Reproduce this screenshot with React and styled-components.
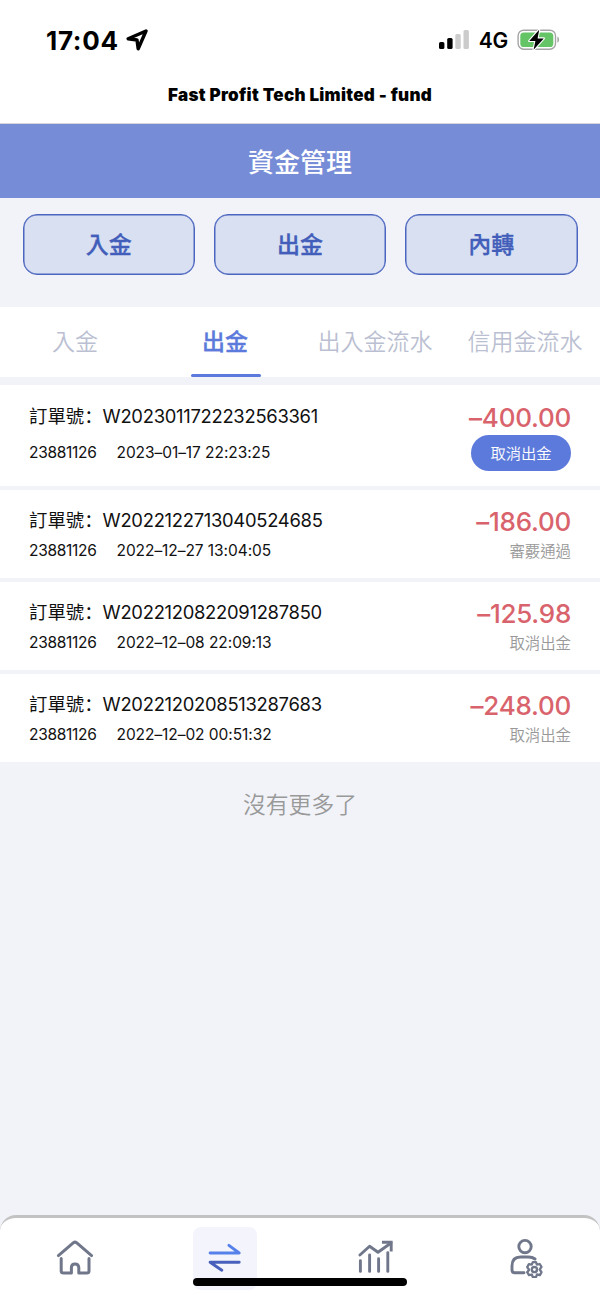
import React from "react";
import styled, { createGlobalStyle } from "styled-components";

const latin = `Inter, "Noto Sans CJK TC", sans-serif`;
const cjk = `"Noto Sans CJK TC", Inter, sans-serif`;

const GlobalStyle = createGlobalStyle`
  * {
    box-sizing: border-box;
  }

  body {
    margin: 0;
    background: #f2f3f8;
    font-family: ${cjk};
    color: #111111;
  }

  button {
    font-family: inherit;
    padding: 0;
    cursor: pointer;
  }
`;

const Screen = styled.div`
  display: flex;
  flex-direction: column;
  width: 600px;
  height: 1298px;
  overflow: hidden;
`;

const StatusBar = styled.div`
  display: flex;
  justify-content: space-between;
  align-items: center;
  height: 80px;
  padding: 0 40px 0 46px;
  background: #ffffff;
  color: #000000;
  font-family: ${latin};
`;

const StatusGroup = styled.div`
  display: flex;
  align-items: center;
  gap: ${({ $gap }) => $gap};
`;

const Clock = styled.span`
  padding-top: 1px;
  font-size: 26px;
  font-weight: 700;
  line-height: 30px;
  letter-spacing: 0.7px;
`;

const Network = styled.span`
  padding-top: 2px;
  font-size: 21px;
  font-weight: 600;
  line-height: 26px;
  letter-spacing: -0.2px;
`;

const PageTitle = styled.div`
  height: 44px;
  padding-top: 5px;
  background: #ffffff;
  border-bottom: 1px solid #d5d6da;
  color: #000000;
  font-family: ${latin};
  font-size: 17px;
  font-weight: 900;
  line-height: 20px;
  letter-spacing: 0.28px;
  text-align: center;
`;

const Header = styled.header`
  display: flex;
  justify-content: center;
  align-items: center;
  height: 74px;
  padding-bottom: 2px;
  background: #768cd7;
  color: #ffffff;
  font-size: 26px;
  font-weight: 500;
`;

const Actions = styled.div`
  display: grid;
  grid-template-columns: repeat(3, 1fr);
  gap: 18.5px;
  height: 109px;
  padding: 16px 22.5px 32px;
`;

const ActionButton = styled.button`
  border: 1.5px solid #4c66c0;
  border-radius: 14px;
  padding-bottom: 3px;
  background: #d8e0f2;
  box-shadow: inset 0 0 0 0.5px #4c66c0;
  color: #425eba;
  font-size: 23px;
  font-weight: 500;
  -webkit-text-stroke: 0.3px #425eba;
`;

const Tabs = styled.nav`
  display: grid;
  grid-template-columns: repeat(4, 1fr);
  height: 70px;
  margin-bottom: 8px;
  background: #ffffff;
`;

const Tab = styled.button`
  display: flex;
  flex-direction: column;
  justify-content: space-between;
  align-items: center;
  border: 0;
  background: none;
  color: ${({ $active }) => ($active ? "#5c7adb" : "#bbbfd2")};
  font-size: 23px;
  font-weight: ${({ $active }) => ($active ? 500 : 350)};
  -webkit-text-stroke: ${({ $active }) => ($active ? "0.3px #5c7adb" : "0")};
  line-height: 34px;
  padding-top: 16px;

  &::after {
    content: "";
    width: 70px;
    height: 3px;
    margin-left: 2px;
    border-radius: 2px;
    background: ${({ $active }) => ($active ? "#5c7adb" : "transparent")};
  }
`;

const OrderList = styled.main`
  display: flex;
  flex-direction: column;
  gap: 4px;
`;

const OrderRow = styled.article`
  display: flex;
  justify-content: space-between;
  height: ${({ $tall }) => ($tall ? "101px" : "88px")};
  padding: ${({ $tall }) => ($tall ? "17px" : "16px")} 29px 0;
  background: #ffffff;
`;

const OrderInfo = styled.div`
  display: flex;
  flex-direction: column;
  gap: ${({ $tall }) => ($tall ? "10px" : "4px")};
`;

const OrderNumber = styled.div`
  display: flex;
  height: 28px;
  line-height: 28px;
  font-size: 18.4px;
`;

const OrderLabel = styled.span`
  margin-top: -1px;
`;

const Colon = styled.span`
  font-family: "Noto Sans CJK SC", sans-serif;
  margin-top: -1px;
`;

const OrderCode = styled.span`
  font-family: ${latin};
  font-size: 18.4px;
  letter-spacing: -0.28px;
`;

const OrderMeta = styled.div`
  display: flex;
  gap: 20px;
  font-family: ${latin};
  font-size: 15.5px;
  line-height: 26px;
`;

const Account = styled.span`
  letter-spacing: -0.3px;
`;

const Time = styled.span`
  letter-spacing: -0.06px;
`;

const OrderResult = styled.div`
  display: flex;
  flex-direction: column;
  align-items: flex-end;
`;

const Amount = styled.div`
  height: ${({ $tall }) => ($tall ? "33px" : "31px")};
  color: #d9636c;
  font-family: ${latin};
  font-size: 26px;
  font-weight: 500;
  line-height: 32px;
  letter-spacing: -0.25px;
`;

const CancelButton = styled.button`
  width: 100px;
  height: 36px;
  padding-bottom: 2px;
  border: 0;
  border-radius: 18px;
  background: #5c7adb;
  color: #ffffff;
  font-size: 15.3px;
  font-weight: 350;
  line-height: 34px;
`;

const Status = styled.div`
  color: #999999;
  font-size: 15.4px;
  font-weight: 350;
  line-height: 26px;
`;

const EndNote = styled.p`
  margin: 25px 0 0;
  color: #999999;
  font-size: 22.8px;
  font-weight: 350;
  line-height: 34px;
  text-align: center;
`;

const TabBar = styled.footer`
  position: relative;
  display: grid;
  grid-template-columns: repeat(4, 1fr);
  justify-items: center;
  height: 83px;
  margin-top: auto;
  padding-top: 9px;
  border-top: 3px solid #c2c2c2;
  border-radius: 16px 16px 0 0;
  background: #ffffff;
`;

const TabBarItem = styled.button`
  display: flex;
  justify-content: center;
  align-items: center;
  width: 64px;
  height: 63px;
  padding-bottom: 3px;
  border: 0;
  border-radius: 8px;
  background: ${({ $active }) => ($active ? "#f3f4fc" : "transparent")};
`;

const HomeIndicator = styled.div`
  position: absolute;
  left: 193px;
  bottom: 12px;
  width: 214px;
  height: 8px;
  border-radius: 4px;
  background: #000000;
`;

const LocationIcon = () => (
  <svg width="22" height="22" viewBox="0 0 22 22" fill="none">
    <path
      d="M20 2L2.2 9.8L11 11L12.2 19.8Z"
      stroke="#000000"
      strokeWidth="3.4"
      strokeLinejoin="round"
    />
  </svg>
);

const SignalIcon = () => (
  <svg width="31" height="20" viewBox="0 0 31 20">
    <rect x="0" y="12" width="5.4" height="7" rx="1.6" fill="#000000" />
    <rect x="8.2" y="8" width="5.4" height="11" rx="1.6" fill="#000000" />
    <rect x="16.3" y="4" width="5.4" height="15" rx="1.6" fill="#cccccc" />
    <rect x="24.5" y="0" width="5.4" height="19" rx="1.6" fill="#cccccc" />
  </svg>
);

const BatteryIcon = () => (
  <svg width="43" height="22" viewBox="0 0 43 22">
    <rect
      x="1.1"
      y="1.2"
      width="37.4"
      height="19"
      rx="5.6"
      fill="#ffffff"
      stroke="#a5a5a5"
      strokeWidth="1.4"
    />
    <rect x="3.3" y="3.4" width="33" height="14.6" rx="3.6" fill="#65c466" />
    <path d="M40.4 7.5C42.6 8.4 42.6 13 40.4 13.8Z" fill="#a5a5a5" />
    <path
      d="M22.2 0.8L12.2 12H18.4L16.6 20.8L26.8 9.4H20.6Z"
      fill="#000000"
      stroke="#ffffff"
      strokeWidth="2.2"
      strokeLinejoin="round"
      paintOrder="stroke"
    />
  </svg>
);

const HomeIcon = () => (
  <svg
    width="38"
    height="38"
    viewBox="0 0 38 38"
    fill="none"
    stroke="#70778a"
    strokeWidth="3"
    strokeLinecap="round"
    strokeLinejoin="round"
  >
    <path d="M2.4 17.6L17.5 4.7Q19 3.6 20.5 4.7L35.6 17.6" />
    <path d="M5.2 20.4V33Q5.2 35 7.6 35H15.4V29.6Q15.4 25.9 19 25.9T22.8 29.6V35H30.8Q33 35 33 33V20.4" />
  </svg>
);

const TransferIcon = () => (
  <svg
    width="36"
    height="32"
    viewBox="0 0 36 32"
    fill="none"
    strokeWidth="2.9"
    strokeLinecap="round"
    strokeLinejoin="round"
  >
    <path d="M3.1 12H32.2L21.9 4.4" stroke="#5680ea" />
    <path d="M32.2 21.2H3.1L14.8 29.2" stroke="#4860bb" />
  </svg>
);

const ChartIcon = () => (
  <svg
    width="38"
    height="38"
    viewBox="0 0 38 38"
    fill="none"
    stroke="#70778a"
    strokeWidth="2.9"
    strokeLinecap="round"
  >
    <path d="M4.4 22.6V33.4M13.6 17V33.4M22.6 20.8V33.4M31.8 14.6V33.4" />
    <path d="M3.9 17L13.6 8.2L22 14.2L35 5" strokeLinejoin="round" />
    <path d="M27.4 4.3H35.2V12" strokeLinecap="square" />
  </svg>
);

const ProfileIcon = () => (
  <svg
    width="38"
    height="42"
    viewBox="0 0 38 42"
    fill="none"
    stroke="#70778a"
    strokeLinecap="round"
    strokeLinejoin="round"
  >
    <circle cx="19" cy="10.6" r="6.2" strokeWidth="2.9" />
    <path
      d="M29 23Q26.5 21 22.5 21H14.5Q6 21 6 30V34Q6 36.8 8.8 36.8H18"
      strokeWidth="2.9"
    />
    <g strokeWidth="2.3" transform="translate(0 1.2)">
      <path d="M26.8 24.9H30L30.9 27.5L33.7 26.8L35.5 29.7L33.7 32.3L35.5 35L33.9 37.9L31 37.3L30 39.9H26.8L25.8 37.3L23 37.9L21.2 35L23.1 32.5L21.2 29.9L22.9 26.9L25.8 27.5Z" />
      <circle cx="28.4" cy="32.4" r="2.6" />
    </g>
  </svg>
);

const tabs = ["入金", "出金", "出入金流水", "信用金流水"];

const orders = [
  {
    code: "W2023011722232563361",
    account: "23881126",
    time: "2023–01–17 22:23:25",
    amount: "–400.00",
    cancellable: true,
  },
  {
    code: "W2022122713040524685",
    account: "23881126",
    time: "2022–12–27 13:04:05",
    amount: "–186.00",
    status: "審覈通過",
  },
  {
    code: "W2022120822091287850",
    account: "23881126",
    time: "2022–12–08 22:09:13",
    amount: "–125.98",
    status: "取消出金",
  },
  {
    code: "W2022120208513287683",
    account: "23881126",
    time: "2022–12–02 00:51:32",
    amount: "–248.00",
    status: "取消出金",
  },
];

const Order = ({ code, account, time, amount, status, cancellable }) => (
  <OrderRow $tall={cancellable}>
    <OrderInfo $tall={cancellable}>
      <OrderNumber>
        <OrderLabel>訂單號</OrderLabel>
        <Colon lang="zh-CN">：</Colon>
        <OrderCode>{code}</OrderCode>
      </OrderNumber>
      <OrderMeta>
        <Account>{account}</Account>
        <Time>{time}</Time>
      </OrderMeta>
    </OrderInfo>
    <OrderResult>
      <Amount $tall={cancellable}>{amount}</Amount>
      {cancellable ? (
        <CancelButton>取消出金</CancelButton>
      ) : (
        <Status>{status}</Status>
      )}
    </OrderResult>
  </OrderRow>
);

const App = () => {
  return (
    <>
      <GlobalStyle />
      <Screen>
        <StatusBar>
          <StatusGroup $gap="7px">
            <Clock>17:04</Clock>
            <LocationIcon />
          </StatusGroup>
          <StatusGroup $gap="9px">
            <SignalIcon />
            <Network>4G</Network>
            <BatteryIcon />
          </StatusGroup>
        </StatusBar>
        <PageTitle>Fast Profit Tech Limited - fund</PageTitle>
        <Header>資金管理</Header>
        <Actions>
          <ActionButton>入金</ActionButton>
          <ActionButton>出金</ActionButton>
          <ActionButton>內轉</ActionButton>
        </Actions>
        <Tabs>
          {tabs.map((label) => (
            <Tab key={label} $active={label === "出金"}>
              {label}
            </Tab>
          ))}
        </Tabs>
        <OrderList>
          {orders.map((order) => (
            <Order key={order.code} {...order} />
          ))}
        </OrderList>
        <EndNote>沒有更多了</EndNote>
        <TabBar>
          <TabBarItem>
            <HomeIcon />
          </TabBarItem>
          <TabBarItem $active>
            <TransferIcon />
          </TabBarItem>
          <TabBarItem>
            <ChartIcon />
          </TabBarItem>
          <TabBarItem>
            <ProfileIcon />
          </TabBarItem>
          <HomeIndicator />
        </TabBar>
      </Screen>
    </>
  );
};

export default App;
